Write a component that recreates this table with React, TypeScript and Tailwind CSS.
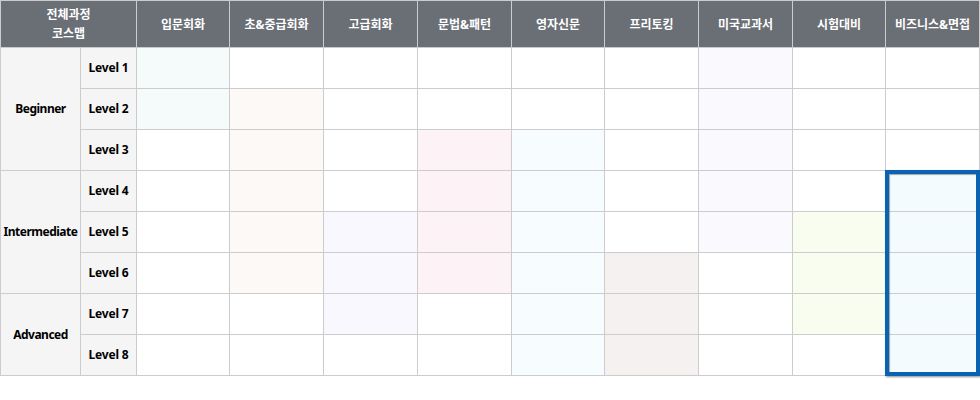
import React from "react";

const headers = ["입문회화", "초&중급회화", "고급회화", "문법&패턴", "영자신문", "프리토킹", "미국교과서", "시험대비", "비즈니스&면접"];

// [color, fromLevel, toLevel]
const tints: [string, number, number][] = [
  ["bg-[#f5fbfa]", 1, 2],
  ["bg-[#fdf9f6]", 2, 6],
  ["bg-[#f9f8fe]", 5, 7],
  ["bg-[#fdf3f6]", 3, 6],
  ["bg-[#f7fcfe]", 3, 8],
  ["bg-[#f4f1f0]", 6, 8],
  ["bg-[#f9f9fe]", 1, 5],
  ["bg-[#f9fdf0]", 5, 7],
  ["bg-[#f3fbfe]", 4, 8],
];

const groups: { name: string; rows: number; start: number }[] = [
  { name: "Beginner", rows: 3, start: 1 },
  { name: "Intermediate", rows: 3, start: 4 },
  { name: "Advanced", rows: 2, start: 7 },
];

const font = { fontFamily: '"Noto Sans", "Noto Sans CJK KR", sans-serif' };

export default function App() {
  const levels = [1, 2, 3, 4, 5, 6, 7, 8];
  return (
    <div className="w-[980px] h-[400px] bg-white" style={font}>
      <div className="relative w-[980px]">
        <div className="grid grid-cols-[79px_55px_92px_93px_93px_93px_92px_93px_93px_92px_93px] grid-rows-[46px_repeat(8,40px)] gap-px bg-[#cccccc] p-px">
          <div className="col-span-2 bg-[#6a6e75] text-white text-[12px] font-bold leading-[19px] flex flex-col items-center justify-center">
            <span>전체과정</span>
            <span>코스맵</span>
          </div>
          {headers.map((h) => (
            <div key={h} className="bg-[#6a6e75] text-white text-[12px] font-bold flex items-center justify-center pt-px">
              {h}
            </div>
          ))}
          {levels.map((lv) => {
            const g = groups.find((x) => x.start === lv);
            return (
              <React.Fragment key={lv}>
                {g && (
                  <div
                    className={`bg-[#f5f5f5] text-[12px] font-bold text-black flex items-center justify-center tracking-[-0.5px] ${
                      g.rows === 3 ? "row-span-3" : "row-span-2"
                    }`}
                  >
                    {g.name}
                  </div>
                )}
                <div className="bg-[#f5f5f5] text-[12px] font-bold text-black flex items-center justify-center tracking-[-0.2px]">
                  Level {lv}
                </div>
                {tints.map(([c, a, b], i) => (
                  <div key={i} className={lv >= a && lv <= b ? c : "bg-white"} />
                ))}
              </React.Fragment>
            );
          })}
        </div>
        <div className="absolute left-[885px] top-[170px] w-[95px] h-[206px] border-4 border-[#0a62b3] shadow-[1px_1px_2px_rgba(0,0,0,0.45),inset_1px_1px_1px_rgba(0,0,0,0.35)]" />
      </div>
    </div>
  );
}
